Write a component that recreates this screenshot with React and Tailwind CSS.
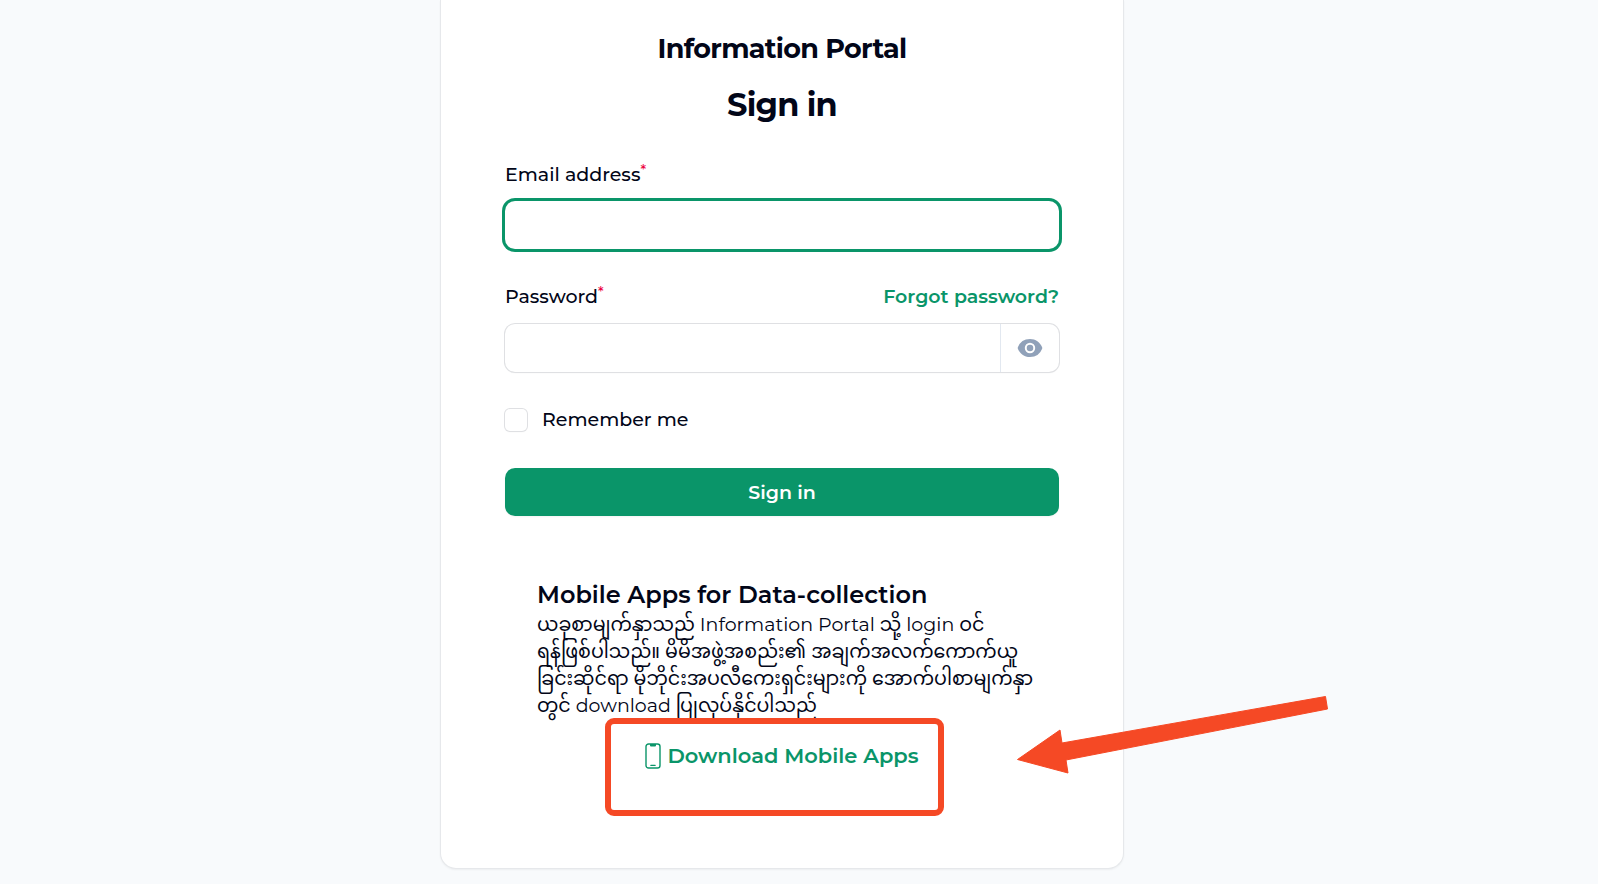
function EyeIcon() {
  return (
    <svg viewBox="0 0 20 20" fill="currentColor" className="size-[26px]" aria-hidden="true">
      <path d="M10 12.5a2.5 2.5 0 1 0 0-5 2.5 2.5 0 0 0 0 5Z" />
      <path
        fillRule="evenodd"
        clipRule="evenodd"
        d="M.664 10.59a1.651 1.651 0 0 1 0-1.186A10.004 10.004 0 0 1 10 3c4.257 0 7.893 2.66 9.336 6.41.147.381.146.804 0 1.186A10.004 10.004 0 0 1 10 17c-4.257 0-7.893-2.66-9.336-6.41ZM14 10a4 4 0 1 1-8 0 4 4 0 0 1 8 0Z"
      />
    </svg>
  );
}

function PhoneIcon() {
  return (
    <svg viewBox="0 0 16 26" fill="none" stroke="currentColor" className="h-[26px] w-4 shrink-0" aria-hidden="true">
      <rect x="1" y="1" width="14" height="24" rx="2.6" strokeWidth="1.4" />
      <path d="M5 1h6v1.6a1 1 0 0 1-1 1H6a1 1 0 0 1-1-1Z" fill="currentColor" stroke="none" />
      <path d="M5.8 22.300h4.400" strokeWidth="1.2" strokeLinecap="round" />
    </svg>
  );
}

function Label({ htmlFor, children }) {
  return (
    <label htmlFor={htmlFor} className="font-medium">
      {children}
      <sup className="-top-1.5 text-[14px] text-rose-600">*</sup>
    </label>
  );
}

export default function App() {
  return (
    <div className="flex min-h-screen justify-center overflow-hidden bg-[#f8fafc] pr-[34px] font-['Montserrat','Inter','Noto_Sans_Myanmar','Noto_Sans',sans-serif] text-[19px] leading-[27px] text-slate-950 antialiased">
      <main className="mb-4 w-full max-w-[684px] self-start rounded-b-2xl border-x border-b border-[#e6e8eb] bg-white px-16 pb-24 pt-[29px] shadow-xs">
        <header className="flex flex-col items-center gap-4">
          <p className="text-[27px] font-bold leading-10 tracking-tight">Information Portal</p>
          <h1 className="text-[32px] font-bold leading-10 tracking-tight">Sign in</h1>
        </header>

        <form className="mt-9 flex flex-col" onSubmit={(e) => e.preventDefault()}>
          <div className="flex flex-col gap-[13px]">
            <Label htmlFor="email">Email address</Label>
            <input
              id="email"
              type="email"
              className="h-12 rounded-[10px] px-4 outline-none ring-[3px] ring-[#0a9569]"
            />
          </div>

          <div className="mt-[34px] flex flex-col gap-[14px]">
            <div className="flex items-center justify-between">
              <Label htmlFor="password">Password</Label>
              <a href="#forgot" className="font-semibold text-[#0a9569]">Forgot password?</a>
            </div>
            <div className="flex h-12 rounded-[10px] shadow-xs ring-1 ring-[#dfe0e3]">
              <input id="password" type="password" className="min-w-0 flex-1 px-4 outline-none" />
              <button
                type="button"
                aria-label="Show password"
                className="flex w-[59px] items-center justify-center border-l border-slate-200 text-slate-400"
              >
                <EyeIcon />
              </button>
            </div>
          </div>

          <label className="mt-[34px] flex items-center gap-[15px] font-medium">
            <input
              type="checkbox"
              className="size-[22px] appearance-none rounded-[5px] bg-white shadow-xs ring-1 ring-[#dfe0e3]"
            />
            Remember me
          </label>

          <button type="submit" className="mt-[35px] h-12 rounded-[10px] bg-[#0a9569] font-semibold text-white shadow-xs">
            Sign in
          </button>
        </form>

        <section className="mt-[62px] px-8">
          <h2 className="text-2xl font-semibold leading-[33px]">Mobile Apps for Data-collection</h2>
          <p className="whitespace-nowrap">
            ယခုစာမျက်နှာသည် Information Portal သို့ login ဝင်
            <br />
            ရန်ဖြစ်ပါသည်။ မိမိအဖွဲ့အစည်း၏ အချက်အလက်ကောက်ယူ
            <br />
            ခြင်းဆိုင်ရာ မိုဘိုင်းအပလီကေးရှင်းများကို အောက်ပါစာမျက်နှာ
            <br />
            တွင် download ပြုလုပ်နိုင်ပါသည်
          </p>
          <div className="relative mt-[21px] flex justify-center">
            <a
              href="#download"
              className="flex items-center gap-1.5 text-[21px] font-semibold leading-8 text-[#0a9569]"
            >
              <PhoneIcon />
              Download Mobile Apps
            </a>
            <div className="pointer-events-none absolute -top-[22px] left-[68px] h-[98px] w-[339px] rounded-[9px] border-[6px] border-[#f54925]" />
            <svg
              viewBox="0 0 312 80"
              className="pointer-events-none absolute -top-[45px] left-[480px] h-20 w-[312px]"
              fill="#f54925"
              stroke="#f54925"
              strokeWidth="1"
              strokeLinejoin="round"
              aria-hidden="true"
            >
              <path d="M.5 64.500 43 35l2 13L308.500 1.500l2 12.500L49 65l2 13Z" />
            </svg>
          </div>
        </section>
      </main>
    </div>
  );
}
